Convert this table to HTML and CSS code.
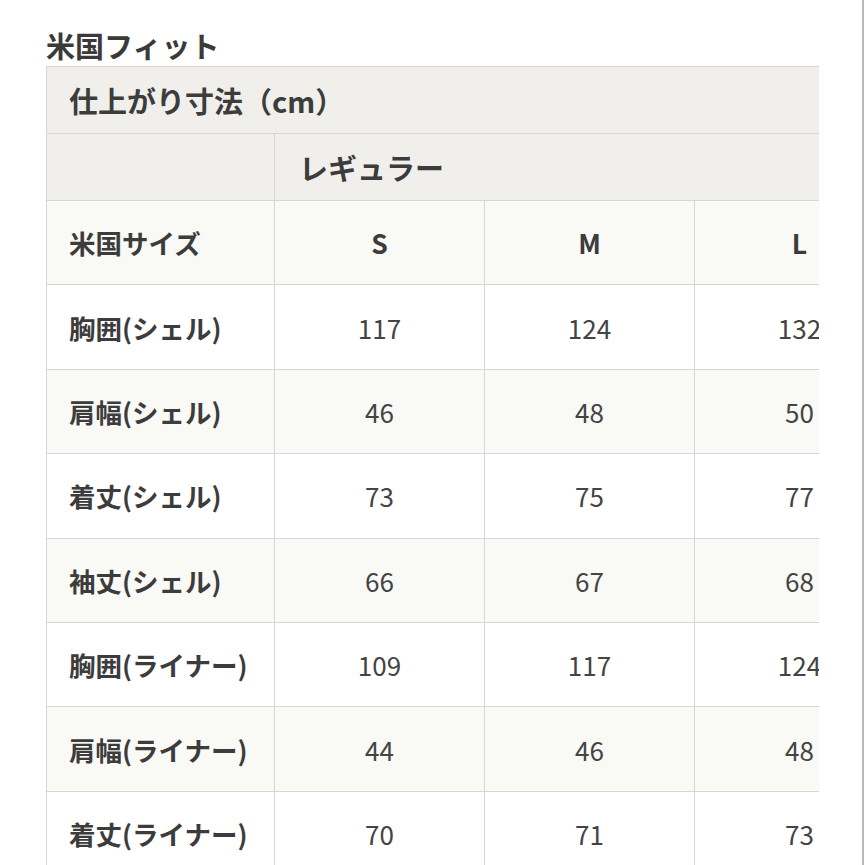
FILE: index.html
```html
<!DOCTYPE html>
<html lang="ja">
<head>
<meta charset="utf-8">
<link rel="stylesheet" href="styles.css">
</head>
<body>
<div class="page">
  <h2 class="title">米国フィット</h2>
  <div class="scroller">
    <table class="size-table">
      <colgroup>
        <col class="c-label"><col class="c-size"><col class="c-size"><col class="c-size">
      </colgroup>
      <tr class="head">
        <th colspan="4" class="left">仕上がり寸法（cm）</th>
      </tr>
      <tr class="head">
        <th></th>
        <th colspan="3" class="left">レギュラー</th>
      </tr>
      <tr class="odd">
        <th class="label">米国サイズ</th>
        <th>S</th><th>M</th><th>L</th>
      </tr>
      <tr class="even"><th class="label">胸囲(シェル)</th><td>117</td><td>124</td><td>132</td></tr>
      <tr class="odd"><th class="label">肩幅(シェル)</th><td>46</td><td>48</td><td>50</td></tr>
      <tr class="even"><th class="label">着丈(シェル)</th><td>73</td><td>75</td><td>77</td></tr>
      <tr class="odd"><th class="label">袖丈(シェル)</th><td>66</td><td>67</td><td>68</td></tr>
      <tr class="even"><th class="label">胸囲(ライナー)</th><td>109</td><td>117</td><td>124</td></tr>
      <tr class="odd"><th class="label">肩幅(ライナー)</th><td>44</td><td>46</td><td>48</td></tr>
      <tr class="even"><th class="label">着丈(ライナー)</th><td>70</td><td>71</td><td>73</td></tr>
    </table>
  </div>
</div>
</body>
</html>
```

FILE: styles.css
```css
html, body {
  margin: 0;
  padding: 0;
  background: #ffffff;
}
body {
  font-family: "Noto Sans CJK JP", "Noto Sans", sans-serif;
  color: #3a3a3a;
  overflow: hidden;
  height: 865px;
}
.page {
  width: 864px;
  height: 865px;
  padding-left: 46px;
  border-right: 2px solid #b8b8b8;
  box-sizing: border-box;
}
.title {
  margin: 0;
  padding-top: 25px;
  height: 41px;
  font-size: 29px;
  line-height: 40px;
  font-weight: 700;
  color: #3a3a3a;
}
.scroller {
  width: 773px;
  overflow: hidden;
}
.size-table {
  border-collapse: collapse;
  table-layout: fixed;
  width: 859px;
}
.c-label { width: 228px; }
.c-size { width: 210px; }
.size-table th,
.size-table td {
  border: 1.5px solid #d6d6d4;
  text-align: center;
  padding: 0;
  height: 83.4px;
  color: #3c3c3c;
}
.size-table th {
  font-weight: 700;
  font-size: 26.5px;
}
.size-table td {
  font-weight: 400;
  font-size: 26px;
  color: #444;
}
.size-table tr.head th {
  background: #f0efeb;
  height: 66px;
  font-size: 29px;
}
.size-table th.left {
  text-align: left;
  padding-left: 24px;
}
.size-table tr.head th.left:first-child {
  padding-left: 22px;
}
.size-table th.label {
  text-align: left;
  padding-left: 22px;
}
.size-table tr.odd th,
.size-table tr.odd td {
  background: #f9f9f5;
}
.size-table tr.even th,
.size-table tr.even td {
  background: #ffffff;
}
```
